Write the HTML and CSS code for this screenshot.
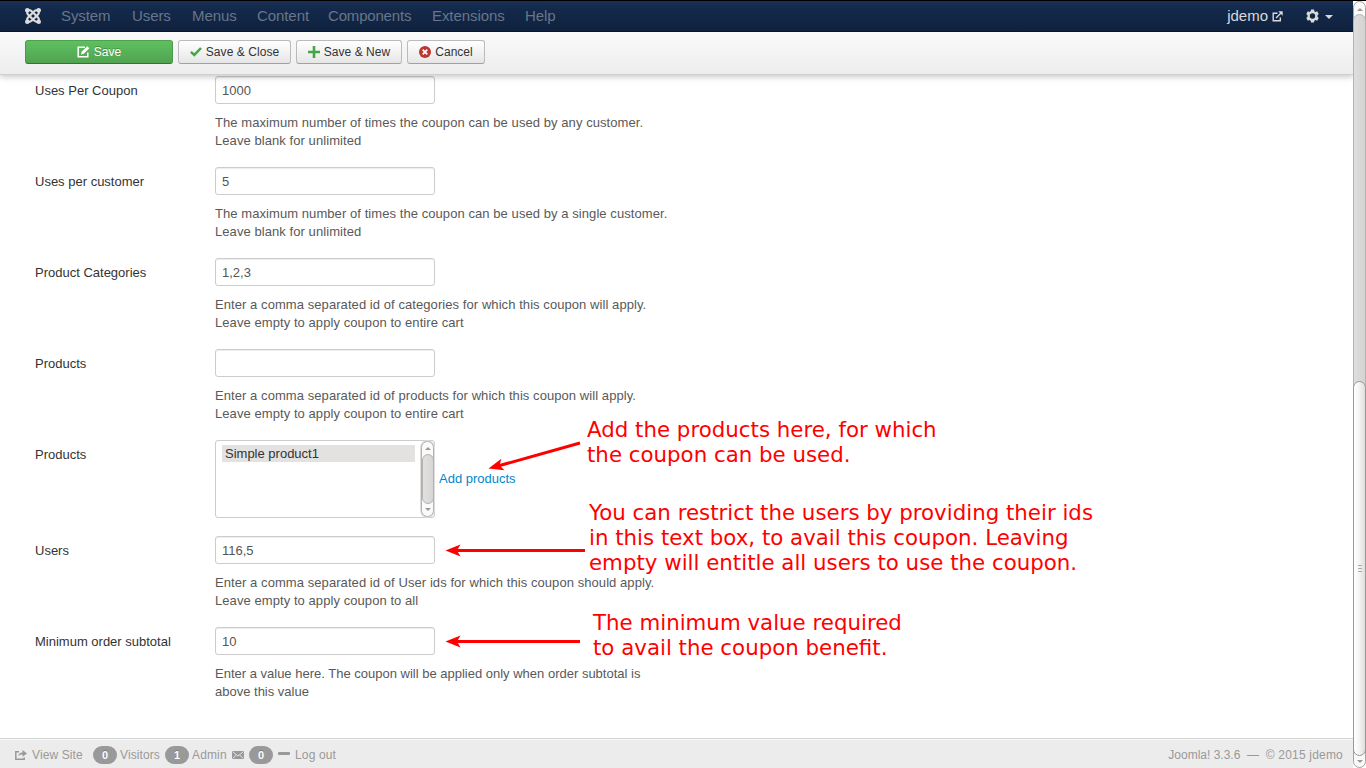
FILE: index.html
```html
<!DOCTYPE html>
<html lang="en">
<head>
<meta charset="utf-8">
<title>Coupon - Administration</title>
<link rel="stylesheet" href="styles.css">
</head>
<body>
<div class="app">
  <div class="page">
    <header class="navbar">
      <svg class="brand" width="16" height="16" viewBox="0 0 16 16" fill="none" stroke="#dcdcdc">
        <g stroke-width="2.200" stroke-linecap="round" stroke-linejoin="round">
          <path d="M2.200 2.500v2.200q0 1 .8 1.800l5.800 5.800q1.500 1.500 3.200 1.500h1.500"/>
          <path d="M13.800 2.500v2.200q0 1-.8 1.800l-5.800 5.800q-1.500 1.500-3.200 1.500H2.500"/>
          <path d="M2.500 2.200H4q1.700 0 3.200 1.500l5.800 5.800q.8.800.8 1.800v2.200"/>
          <path d="M13.500 2.200H12q-1.700 0-3.200 1.500L3 9.500q-.8.800-.8 1.800v2.200"/>
        </g>
        <g fill="#dcdcdc" stroke="none"><circle cx="2.300" cy="2.300" r="2.300"/><circle cx="13.700" cy="2.300" r="2.300"/><circle cx="2.300" cy="13.700" r="2.300"/><circle cx="13.700" cy="13.700" r="2.300"/></g>
      </svg>
      <nav class="menu">
        <span>System</span><span>Users</span><span>Menus</span><span>Content</span><span class="tight">Components</span><span>Extensions</span><span>Help</span>
      </nav>
      <div class="account">
        <span>jdemo</span>
        <svg class="ext" width="11" height="11" viewBox="0 0 11 11" fill="none" stroke="#d9d9d9" stroke-width="1.400"><path d="M5.500 2.200H1.200v7.600h7.100V6.500M4 7l5-5"/><path d="M6.300.3h4.400v4.400z" fill="#d9d9d9" stroke="none"/></svg>
        <svg class="gear" width="13" height="14" viewBox="0 0 13 14"><path fill="#d9d9d9" fill-rule="evenodd" d="M5 .6h3l.4 1.700 1.100.6 1.700-.6 1.500 2.600L11.500 6.200v1.600l1.200 1.300-1.500 2.600-1.700-.6-1.100.6L8 13.400H5l-.4-1.700-1.100-.6-1.700.6L.3 9.100l1.200-1.300V6.200L.3 4.900l1.500-2.600 1.700.6 1.100-.6zM6.500 4.300a2.700 2.700 0 1 0 0 5.400 2.700 2.700 0 0 0 0-5.400z"/></svg>
        <i class="caret"></i>
      </div>
    </header>
    <div class="toolbar">
      <button class="btn save"><svg width="13" height="12" viewBox="0 0 13 12" fill="none" stroke="#fff" stroke-width="1.500"><path d="M8 1.200H1.200v9.600h9.600V6.500"/><path d="M4 8.500l.7-2.700L10.300.3l2 1.900-5.500 5.500z" fill="#fff" stroke="none"/></svg><span>Save</span></button>
      <button class="btn close"><svg width="12" height="10" viewBox="0 0 12 10" fill="none" stroke="#46a546" stroke-width="2.500"><path d="M.9 4.800l3.400 3.100L11 1"/></svg><span>Save &amp; Close</span></button>
      <button class="btn new"><svg width="12" height="12" viewBox="0 0 12 12" stroke="#46a546" stroke-width="2.600"><path d="M0 6h12M6 0v12"/></svg><span>Save &amp; New</span></button>
      <button class="btn cancel"><svg width="12" height="12" viewBox="0 0 12 12"><circle cx="6" cy="6" r="6" fill="#bd362f"/><path d="M3.700 3.700l4.600 4.600M8.300 3.700L3.700 8.300" stroke="#fff" stroke-width="1.800"/></svg><span>Cancel</span></button>
    </div>
    <main class="form">
      <div class="row"><label>Uses Per Coupon</label><div><div class="input">1000</div><p>The maximum number of times the coupon can be used by any customer.<br>Leave blank for unlimited</p></div></div>
      <div class="row"><label>Uses per customer</label><div><div class="input">5</div><p>The maximum number of times the coupon can be used by a single customer.<br>Leave blank for unlimited</p></div></div>
      <div class="row"><label>Product Categories</label><div><div class="input">1,2,3</div><p>Enter a comma separated id of categories for which this coupon will apply.<br>Leave empty to apply coupon to entire cart</p></div></div>
      <div class="row"><label>Products</label><div><div class="input"></div><p>Enter a comma separated id of products for which this coupon will apply.<br>Leave empty to apply coupon to entire cart</p></div></div>
      <div class="row list-row"><label>Products</label><div class="picker">
        <div class="listbox"><div class="option">Simple product1</div>
          <div class="mini-scroll"><i class="up"></i><b></b><i class="down"></i></div></div>
        <a>Add products</a></div></div>
      <div class="row"><label>Users</label><div><div class="input">116,5</div><p>Enter a comma separated id of User ids for which this coupon should apply.<br>Leave empty to apply coupon to all</p></div></div>
      <div class="row"><label>Minimum order subtotal</label><div><div class="input">10</div><p class="plain">Enter a value here. The coupon will be applied only when order subtotal is<br>above this value</p></div></div>
    </main>
    <footer class="status">
      <svg class="share" width="12" height="10" viewBox="0 0 12 10" fill="none" stroke="#999" stroke-width="1.500"><path d="M4 1.700H.8v7.500h8.400V7.500"/><path d="M3.300 6.500C3.500 3.800 5 2.500 7.500 2.400V0L12 3.500 7.500 6.800V4.600C5.500 4.500 4.300 5 3.300 6.500z" fill="#999" stroke="none"/></svg>
      <span class="view">View Site</span>
      <span class="badge">0</span><span class="visitors">Visitors</span>
      <span class="badge">1</span><span class="admin">Admin</span>
      <svg class="mail" width="12" height="8" viewBox="0 0 12 8"><rect width="12" height="8" rx=".8" fill="#999"/><path d="M.8.800L6 5l5.200-4.200M.8 7.300l3.500-3.200M11.200 7.300L7.700 4.100" fill="none" stroke="#ececec" stroke-width=".9"/></svg>
      <span class="badge">0</span><i class="dash"></i><span class="logout">Log out</span>
      <span class="copy">Joomla! 3.3.6 &nbsp;—&nbsp; <span>© 2015 jdemo</span></span>
    </footer>
  </div>
  <div class="scrollbar"><div class="track"></div><i class="up"></i><div class="thumb"><span></span></div><i class="down"></i></div>
</div>
<div class="note n1">Add the products here, for which<br>the coupon can be used.</div>
<div class="note n2">You can restrict the users by providing their ids<br>in this text box, to avail this coupon. Leaving<br>empty will entitle all users to use the coupon.</div>
<div class="note n3">The minimum value required<br>to avail the coupon benefit.</div>
<svg class="arrows" width="1366" height="768" viewBox="0 0 1366 768" fill="#f00">
  <g stroke="#f00" stroke-width="3"><path d="M580 443L498 466"/><path d="M585 550.500H455"/><path d="M580 641.500H455"/></g>
  <path d="M445.500 550.500l15-6-3.500 6 3.500 6z"/>
  <path d="M445.500 641.500l15-6-3.500 6 3.500 6z"/>
  <path d="M488.500 468.500l12.800-9.800-1.700 6.700 4.900 4.900z"/>
</svg>
</body>
</html>
```
FILE: styles.css
```css
* { box-sizing: border-box; }
body { margin: 0; width: 1366px; height: 768px; overflow: hidden; background: #fff; font: 13px/18px "Liberation Sans", Arial, sans-serif; color: #333; }
.app { display: flex; height: 768px; border-top: 1px solid #000; }
.page { width: 1353px; display: flex; flex-direction: column; }
.navbar { flex: none; height: 31px; display: flex; align-items: center; padding-left: 25px; background: linear-gradient(#1a3056, #13294a 30%, #10223e); border-bottom: 1px solid #0a1a33; color: #d9d9d9; font-size: 15px; }
.brand { margin-right: 20px; }
.menu { display: grid; grid-template-columns: 71px 60px 65px 71px 104px 93px auto; color: #69758a; letter-spacing: -.08px; }
.menu .tight { letter-spacing: -.18px; }
.account { display: flex; align-items: center; margin-left: auto; padding-right: 20px; }
.ext { margin: 1px 23px 0 4px; }
.gear { margin-right: 6px; }
.caret { border: 4.5px solid transparent; border-top-color: #d9d9d9; border-bottom: 0; margin-top: 2px; }
.toolbar { flex: none; height: 43px; display: flex; gap: 5px; padding: 8px 25px 0; background: linear-gradient(#fafafa, #ededed); border-bottom: 1px solid #d0d0d0; box-shadow: 0 2px 6px rgba(0,0,0,.22); position: relative; }
.btn { display: flex; height: 24px; padding: 0; align-items: center; justify-content: center; gap: 4px; font: 12px/18px "Liberation Sans", Arial, sans-serif; color: #333; border: 1px solid #bbb; border-bottom-color: #a2a2a2; border-radius: 3px; background: linear-gradient(#fff, #e6e6e6); }
.btn svg { margin-top: -1px; }
.save { width: 148px; color: #fff; background: linear-gradient(#5fc05f, #51a351); border-color: #4fa14f #4a9a4a #387038; text-shadow: 0 -1px 0 rgba(0,0,0,.25); }
.close { width: 113px; }
.close, .new { letter-spacing: .06px; }
.new { width: 106px; }
.cancel { width: 78px; }
.form { flex: 1; padding: 1px 35px 0; min-height: 0; }
.row { height: 91px; display: flex; }
.row label { width: 180px; padding-top: 6px; }
.input { width: 220px; height: 28px; padding: 5px 6px; line-height: 18px; border: 1px solid #ccc; border-radius: 3px; color: #555; box-shadow: inset 0 1px 1px rgba(0,0,0,.075); background: #fff; }
.row p { margin: 10px 0 0; color: #595959; white-space: nowrap; letter-spacing: .07px; }
.row p.plain { letter-spacing: 0; }
.list-row { height: 96px; }
.picker { display: flex; }
.listbox { width: 220px; height: 78px; border: 1px solid #ccc; border-radius: 3px; display: flex; justify-content: space-between; padding-left: 6px; }
.option { width: 193px; height: 17px; margin-top: 4px; padding-left: 3px; line-height: 17px; background: #e3e2e1; }
.mini-scroll { width: 13px; background: #fafafa; border: 1px solid #b5b3b1; border-radius: 7px; display: flex; flex-direction: column; align-items: center; box-shadow: 0 0 0 1px #dedddc; }
.mini-scroll b { width: 12px; height: 50px; border: 1px solid #b5b3b1; border-radius: 6px; background: linear-gradient(90deg, #e3e1df, #d8d6d4); margin: 4px 0; }
.up, .down { border: 3px solid transparent; }
.up { border-top: 0; border-bottom-color: #999; }
.down { border-bottom: 0; border-top-color: #999; }
.mini-scroll .up { margin-top: 5px; }
.picker a { color: #08c; margin: 30px 0 0 4px; }
.status { flex: none; height: 30px; display: flex; align-items: center; padding: 2px 10px 0 15px; font-size: 12px; color: #999; background: #ececec; border-top: 1px solid #d4d4d4; box-shadow: inset 0 1px 0 #fafafa; white-space: nowrap; }
.view { width: 61px; margin-left: 5px; letter-spacing: .1px; }
.badge { width: 24px; height: 18px; border-radius: 9px; text-align: center; background: #999; color: #fff; font-weight: 700; font-size: 11px; line-height: 18px; text-shadow: 0 -1px 0 rgba(0,0,0,.25); }
.visitors { width: 45px; margin-left: 3px; letter-spacing: .1px; }
.admin { width: 40px; margin-left: 3px; letter-spacing: .15px; }
.mail { margin-right: 5px; }
.dash { width: 12px; height: 3px; background: #999; margin: -2px 5px 0; border-radius: 1px; }
.logout { letter-spacing: .15px; }
.copy { margin-left: auto; }
.copy span { letter-spacing: .2px; }
.scrollbar { width: 13px; position: relative; background: #fafafa; border: 1px solid #a5a3a1; border-radius: 7px; display: flex; flex-direction: column; align-items: center; justify-content: space-between; padding: 6px 0 4px; }
.scrollbar .up, .scrollbar .down { position: relative; }
.track { position: absolute; left: -1px; top: 12px; width: 13px; height: 400px; border: 1px solid #b5b3b1; border-radius: 7px 7px 0 0; background: linear-gradient(90deg, #e0dedc, #d5d3d1); }
.thumb { position: absolute; left: -1px; top: 379px; width: 13px; height: 375px; border: 1px solid #9a9896; border-radius: 7px; background: linear-gradient(90deg, #fff, #f4f3f2 50%, #dfdddb); }
.thumb span { position: absolute; left: 4px; top: 183px; width: 4px; height: 7px; background: repeating-linear-gradient(#aaa 0 1px, transparent 1px 3px); }
.note { position: absolute; font: 21.33px/25px "DejaVu Sans", sans-serif; color: #f00; white-space: nowrap; }
.n1 { left: 587px; top: 417px; }
.n2 { left: 589px; top: 500px; }
.n3 { left: 593px; top: 610px; }
.arrows { position: absolute; left: 0; top: 0; pointer-events: none; }
```
